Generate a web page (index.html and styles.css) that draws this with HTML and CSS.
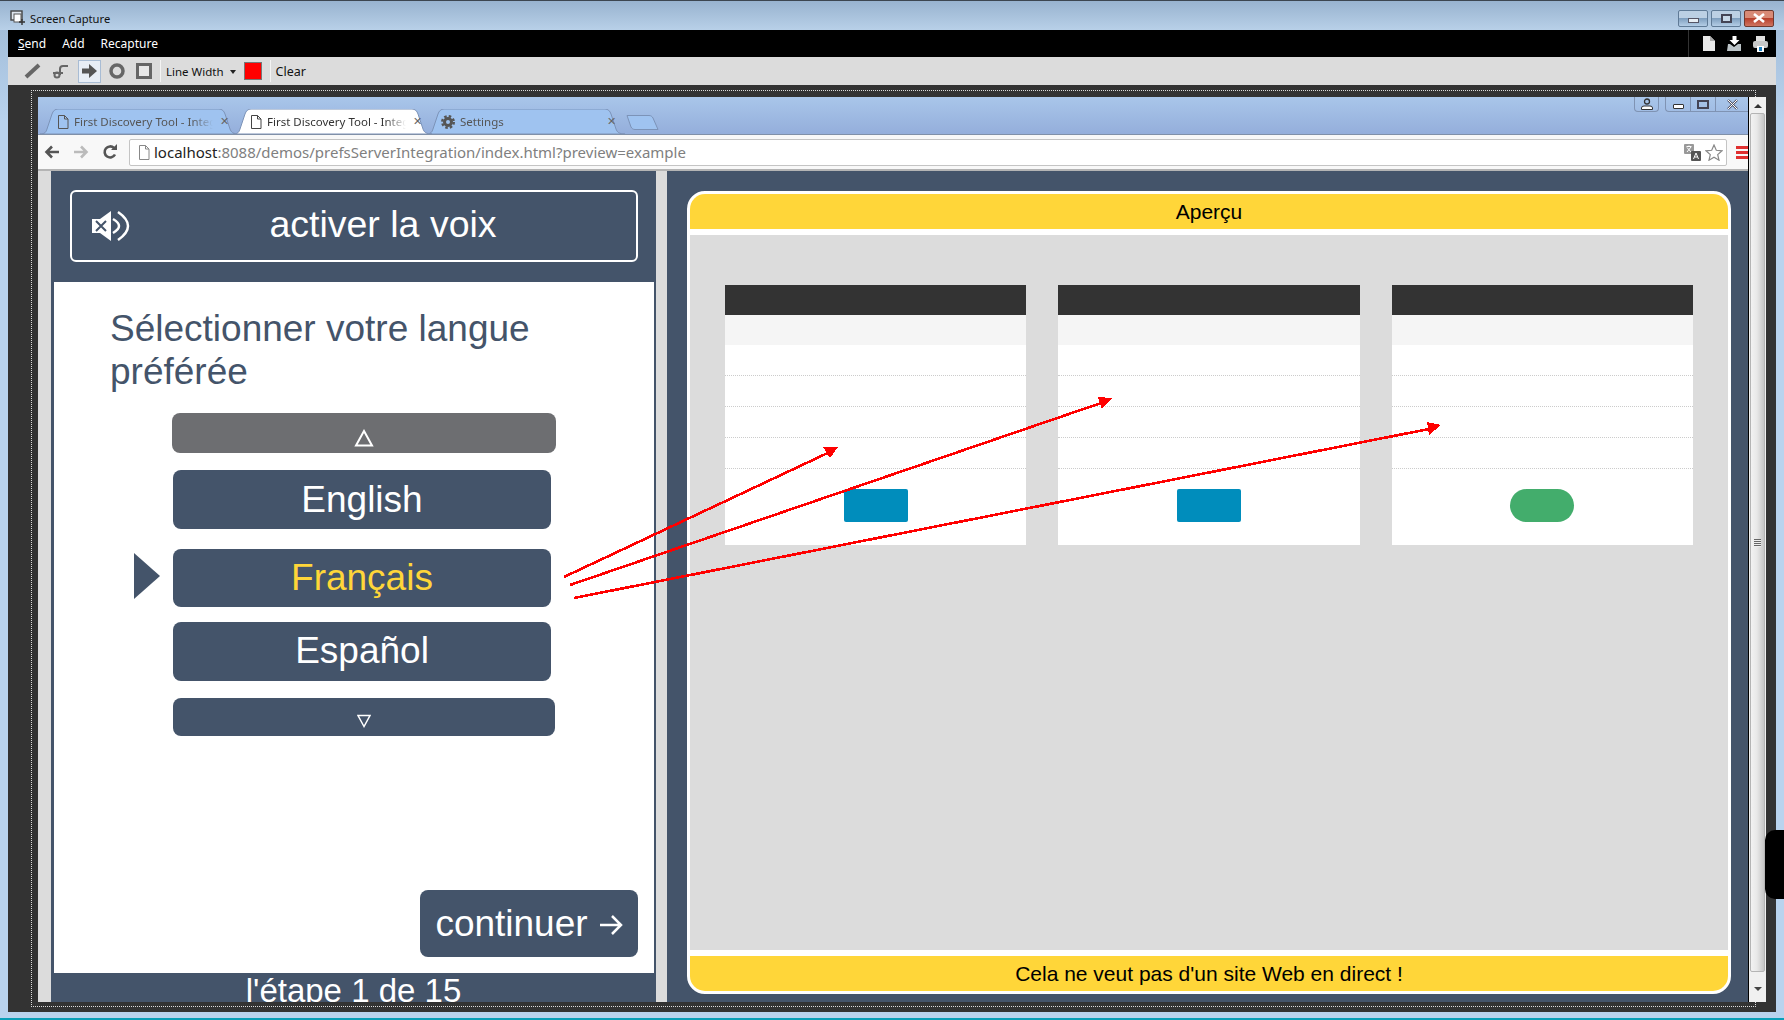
FILE: index.html
```html
<!DOCTYPE html>
<html lang="fr">
<head>
    <meta charset="UTF-8">
    <meta name="viewport" content="width=device-width, initial-scale=1.0">
    <title>Screen Capture</title>
    <link rel="stylesheet" href="styles.css">
</head>

<body>

<div class="window">
    <!-- Title bar -->
    <div class="titlebar">
        <svg class="app-icon" width="16" height="16" viewBox="0 0 16 16">
            <rect x="1" y="1" width="11" height="9" fill="#dfe6ee" stroke="#444" stroke-width="1.4"/>
            <rect x="4" y="4" width="7" height="8" fill="#fff" stroke="#555"/>
            <path d="M12 9v6M9 12h6" stroke="#333" stroke-width="1.4"/>
        </svg>
        <span class="app-title">Screen Capture</span>
        <div class="win-buttons">
            <div class="win-btn"><span class="win-min"></span></div>
            <div class="win-btn"><span class="win-max"></span></div>
            <div class="win-btn win-close">
                <svg width="14" height="10" viewBox="0 0 14 10"><path d="M2 1l10 8M12 1L2 9" stroke="#fff" stroke-width="2.6"/></svg>
            </div>
        </div>
    </div>

    <div class="capture">
        <!-- Menu -->
        <div class="menubar">
            <span class="menu-item"><u>S</u>end</span>
            <span class="menu-item">Add</span>
            <span class="menu-item">Recapture</span>
            <div class="menu-right">
                <svg width="14" height="17" viewBox="0 0 14 17"><path d="M1 1h7l5 5v10H1z" fill="#e8e8e8"/><path d="M8 1v5h5" fill="#aaa"/></svg>
                <svg width="15" height="16" viewBox="0 0 15 16"><path d="M5.500 0h4v4h3l-5 5-5-5h3z" fill="#fff"/><path d="M1 8h2l4 3 4-3h3v7H0z" fill="#bcc4c8"/></svg>
                <svg width="15" height="16" viewBox="0 0 15 16"><rect x="3" y="0" width="9" height="5" fill="#e0e0e0"/><rect x="0" y="5" width="15" height="7" rx="2" fill="#c8c8c8"/><rect x="4" y="10" width="7" height="6" fill="#fff"/><rect x="6" y="11" width="3" height="4" fill="#1a7fc0"/></svg>
            </div>
        </div>

        <!-- Drawing tools -->
        <div class="toolbar">
            <svg class="tool" width="18" height="18" viewBox="0 0 18 18"><path d="M2 15L15 3" stroke="#666" stroke-width="4"/></svg>
            <svg class="tool" width="18" height="18" viewBox="0 0 18 18"><circle cx="5" cy="13" r="2.500" fill="none" stroke="#666" stroke-width="2"/><path d="M1 11h10M8 13V7q0-3 3-3h5" fill="none" stroke="#666" stroke-width="2"/></svg>
            <div class="tool-on">
                <svg width="16" height="16" viewBox="0 0 16 16"><path d="M0 5.500h7V1l8 7-8 7v-4.500H0z" fill="#555"/></svg>
            </div>
            <svg class="tool tool-circle" width="18" height="18" viewBox="0 0 18 18"><circle cx="9" cy="9" r="6" fill="none" stroke="#666" stroke-width="3.500"/></svg>
            <svg class="tool tool-last" width="18" height="18" viewBox="0 0 18 18"><rect x="2.500" y="2.500" width="13" height="13" fill="#e8e8e8" stroke="#666" stroke-width="3"/></svg>
            <span class="tool-sep"></span>
            <span class="tool-label">Line Width</span>
            <span class="caret"></span>
            <span class="swatch"></span>
            <span class="tool-sep"></span>
            <span class="tool-label tool-clear">Clear</span>
        </div>

        <div class="stage">
            <div class="dotted"></div>
            <div class="browser">
                <div class="chrome">
                    <!-- Tabs -->
                    <div class="tabstrip">
                        <div class="tab">
                            <svg class="tab-shape" viewBox="0 0 200 25" preserveAspectRatio="none"><path d="M0 25C5 25 6 23 7 20L12 5C13 2 15 0 18 0H179C182 0 184 2 185 5L190 20C191 23 193 25 199 25Z" fill="#9fc3f0" stroke="#7c93b8"/></svg>
                            <svg class="page-icon" width="12" height="14" viewBox="0 0 12 14"><path d="M1.500.5h6l3.500 3.500v9.500H1.500zM7.500.5V4H11" fill="none" stroke="#555"/></svg>
                            <span class="tab-label">First Discovery Tool - Integ</span>
                            <span class="tab-x">✕</span>
                        </div>
                        <div class="tab tab-active">
                            <svg class="tab-shape" viewBox="0 0 200 25" preserveAspectRatio="none"><path d="M0 25C5 25 6 23 7 20L12 5C13 2 15 0 18 0H179C182 0 184 2 185 5L190 20C191 23 193 25 199 25Z" fill="#fff" stroke="#7c93b8"/></svg>
                            <svg class="page-icon" width="12" height="14" viewBox="0 0 12 14"><path d="M1.500.5h6l3.500 3.500v9.500H1.500zM7.500.5V4H11" fill="none" stroke="#444"/></svg>
                            <span class="tab-label">First Discovery Tool - Integ</span>
                            <span class="tab-x">✕</span>
                        </div>
                        <div class="tab tab-settings">
                            <svg class="tab-shape" viewBox="0 0 200 25" preserveAspectRatio="none"><path d="M0 25C5 25 6 23 7 20L12 5C13 2 15 0 18 0H179C182 0 184 2 185 5L190 20C191 23 193 25 199 25Z" fill="#9fc3f0" stroke="#7c93b8"/></svg>
                            <svg class="page-icon" width="14" height="14" viewBox="0 0 14 14"><circle cx="7" cy="7" r="3.500" fill="none" stroke="#555" stroke-width="3"/><circle cx="7" cy="7" r="5.800" fill="none" stroke="#555" stroke-width="2.400" stroke-dasharray="2.500 2.060"/></svg>
                            <span class="tab-label">Settings</span>
                            <span class="tab-x">✕</span>
                        </div>
                        <svg class="tab-new" width="34" height="17" viewBox="0 0 34 17"><path d="M1 1.500H23C25 1.500 26 2.500 27 4L32 15.500H9C7 15.500 6 14.500 5 13Z" fill="#9fc3f0" stroke="#7c93b8"/></svg>
                        <div class="browser-btns">
                            <div class="bb bb-user">
                                <svg width="14" height="12" viewBox="0 0 14 12"><circle cx="7" cy="3.500" r="2.500" fill="none" stroke="#333" stroke-width="1.300"/><path d="M1.500 11.500V10Q1.500 8 4 8h6q2.500 0 2.500 2v1.500z" fill="#fff" stroke="#333"/></svg>
                            </div>
                            <div class="bb bb-group">
                                <span class="bb-cell"><span class="bb-min"></span></span>
                                <span class="bb-cell"><span class="bb-max"></span></span>
                                <span class="bb-cell bb-last">
                                    <svg width="13" height="11" viewBox="0 0 13 11"><path d="M2 1l9 9M11 1l-9 9" stroke="#556" stroke-width="2.400"/><path d="M2 1l9 9M11 1l-9 9" stroke="#fff" stroke-width="1"/></svg>
                                </span>
                            </div>
                        </div>
                    </div>

                    <!-- Address bar -->
                    <div class="navbar">
                        <svg class="nav-icon" width="16" height="14" viewBox="0 0 16 14"><path d="M15 7H3M8 1.500L2.500 7 8 12.500" fill="none" stroke="#555" stroke-width="2.600"/></svg>
                        <svg class="nav-icon" width="16" height="14" viewBox="0 0 16 14"><path d="M1 7h12M8 1.500L13.500 7 8 12.500" fill="none" stroke="#bbb" stroke-width="2.600"/></svg>
                        <svg class="nav-icon" width="16" height="16" viewBox="0 0 16 16"><path d="M13 10.500A5.500 5.500 0 1 1 12 4" fill="none" stroke="#555" stroke-width="2.600"/><path d="M9 6h6V0z" fill="#555"/></svg>
                        <div class="omnibox">
                            <svg class="omni-page" width="12" height="15" viewBox="0 0 12 15"><path d="M1.500.5h6l3.500 3.500v10.500H1.500zM7.500.5V4H11" fill="#fff" stroke="#888"/></svg>
                            <span class="url"><span class="url-host">localhost</span>:8088/demos/prefsServerIntegration/index.html?preview=example</span>
                            <svg class="omni-translate" width="17" height="17" viewBox="0 0 17 17"><rect x="0" y="0" width="10" height="10" rx="1" fill="#999"/><path d="M2.500 2.500h5M5 1.500v1M3 8l4-5M3 3.500l4 4.500" stroke="#fff" fill="none"/><rect x="7" y="7" width="10" height="10" rx="1" fill="#555"/><path d="M9.500 15l2.500-6 2.500 6M10.500 13h3" stroke="#fff" fill="none"/></svg>
                            <svg class="omni-star" width="18" height="17" viewBox="0 0 18 17"><path d="M9 1l2.300 5.300 5.700.5-4.300 3.800 1.300 5.600L9 13.300 4 16.200l1.300-5.600L1 6.800l5.700-.5z" fill="#fff" stroke="#888" stroke-width="1.200"/></svg>
                        </div>
                        <div class="hamburger"><span></span><span></span><span></span></div>
                    </div>

                    <!-- Page -->
                    <div class="page">
                        <div class="gutter"></div>
                        <div class="left-panel">
                            <div class="voice-btn">
                                <svg class="voice-icon" width="38" height="30" viewBox="0 0 38 30">
                                    <path d="M0 8H8L19 0V30L8 22H0Z" fill="#fff"/>
                                    <path d="M4 10l10 10M14 10L4 20" stroke="#44546a" stroke-width="2"/>
                                    <path d="M21 8Q33 15 21 22" fill="none" stroke="#fff" stroke-width="2.500"/>
                                    <path d="M26 1Q46 15 26 29" fill="none" stroke="#fff" stroke-width="2.500"/>
                                </svg>
                                <span class="voice-text">activer la voix</span>
                            </div>

                            <div class="lang-card">
                                <h1 class="lang-title">Sélectionner votre langue préférée</h1>
                                <div class="lang-up">
                                    <svg width="20" height="18" viewBox="0 0 20 18"><path d="M10 2L18 16.500H2Z" fill="none" stroke="#fff" stroke-width="2"/></svg>
                                </div>
                                <div class="lang-btn lang-english">English</div>
                                <div class="lang-btn lang-french">Français</div>
                                <div class="lang-btn lang-spanish">Español</div>
                                <div class="lang-down">
                                    <svg width="14" height="14" viewBox="0 0 14 14"><path d="M7 12.500L1 1.500H13Z" fill="none" stroke="#fff" stroke-width="1.500"/></svg>
                                </div>
                                <div class="next-btn">
                                    continuer
                                    <svg class="next-arrow" width="24" height="24" viewBox="0 0 24 24"><path d="M1 12H22M13 3L22 12 13 21" fill="none" stroke="#fff" stroke-width="2.500"/></svg>
                                </div>
                            </div>

                            <div class="step">l'étape 1 de 15</div>
                        </div>
                        <div class="divider"></div>

                        <div class="right-panel">
                            <div class="preview">
                                <div class="preview-head">Aperçu</div>
                                <div class="preview-body">
                                    <div class="card">
                                        <div class="card-head"></div>
                                        <div class="card-sub"></div>
                                        <div class="card-row"></div>
                                        <div class="card-row"></div>
                                        <div class="card-row"></div>
                                        <div class="card-row"></div>
                                        <div class="card-foot"><span class="card-btn"></span></div>
                                    </div>
                                    <div class="card">
                                        <div class="card-head"></div>
                                        <div class="card-sub"></div>
                                        <div class="card-row"></div>
                                        <div class="card-row"></div>
                                        <div class="card-row"></div>
                                        <div class="card-row"></div>
                                        <div class="card-foot"><span class="card-btn"></span></div>
                                    </div>
                                    <div class="card">
                                        <div class="card-head"></div>
                                        <div class="card-sub"></div>
                                        <div class="card-row"></div>
                                        <div class="card-row"></div>
                                        <div class="card-row"></div>
                                        <div class="card-row"></div>
                                        <div class="card-foot"><span class="card-btn card-btn-green"></span></div>
                                    </div>
                                </div>
                                <div class="preview-foot">Cela ne veut pas d'un site Web en direct !</div>
                            </div>
                        </div>
                    </div>
                </div>

                <!-- Scrollbar -->
                <div class="scrollbar">
                    <span class="sb-up"></span>
                    <div class="sb-thumb"><span class="sb-grip"></span></div>
                    <span class="sb-down"></span>
                </div>
            </div>
        </div>
    </div>
    <div class="window-foot"></div>

    <!-- Things drawn over the capture -->
    <div class="side-tab"></div>
    <svg class="arrows" width="1784" height="1020" viewBox="0 0 1784 1020">
        <g stroke="#f00" stroke-width="2.600">
            <path d="M564 577L832 451"/>
            <path d="M570 585L1104 402"/>
            <path d="M574 598L1434 428"/>
        </g>
        <g fill="#f00">
            <path d="M823 447L838 447L830 458Z"/>
            <path d="M1098 397L1112 398L1102 409Z"/>
            <path d="M1427 422L1441 425L1429 435Z"/>
        </g>
    </svg>
</div>

</body>
</html>
```

FILE: styles.css
```css
* {
    box-sizing: border-box;
}
html, body {
    margin: 0;
    padding: 0;
    overflow: hidden;
}
body {
    font-family: "Liberation Sans", Arial, sans-serif;
}
.window {
    position: relative;
    width: 1784px;
    height: 1020px;
    display: flex;
    flex-direction: column;
    background: linear-gradient(#9db8d4, #b9d3ee 120px);
    border-top: 1px solid #3c4650;
}

/* title bar */
.titlebar {
    height: 29px;
    display: flex;
    align-items: center;
    padding: 5px 0 0 10px;
    background: linear-gradient(#98b3cf, #b8d0e8);
}
.app-title {
    margin-left: 4px;
    font-family: "Noto Sans", sans-serif;
    font-size: 11.200px;
    color: #111;
}
.win-buttons {
    margin-left: auto;
    margin-right: 10px;
    display: flex;
    gap: 3px;
}
.win-btn {
    width: 30px;
    height: 17px;
    border: 1px solid #5f7a96;
    border-radius: 2px;
    background: linear-gradient(#bcd0e4 45%, #7f9fbf 50%, #b4cde6);
    display: flex;
    align-items: center;
    justify-content: center;
}
.win-close {
    background: linear-gradient(#d88a76 45%, #b8402c 50%, #cf7460);
    border-color: #6e3a30;
}
.win-min {
    width: 11px;
    height: 5px;
    margin-top: 5px;
    background: #e8eef4;
    border: 1px solid #556;
}
.win-max {
    width: 11px;
    height: 9px;
    border: 2px solid #445;
    background: #c8d8e8;
}

.capture {
    flex: 1;
    margin: 0 8px;
    display: flex;
    flex-direction: column;
    min-height: 0;
}
.menubar {
    height: 27px;
    background: #000;
    display: flex;
    align-items: center;
    padding-left: 10px;
    gap: 16px;
    color: #fff;
    font-family: "Noto Sans", sans-serif;
    font-size: 12px;
}
.menu-right {
    margin-left: auto;
    height: 100%;
    border-left: 1px solid #333;
    padding: 0 8px 0 13px;
    display: flex;
    align-items: center;
    gap: 11px;
}

.toolbar {
    height: 28px;
    background: #dcdcdc;
    display: flex;
    align-items: center;
    padding-left: 16px;
    font-family: "Noto Sans", sans-serif;
    font-size: 11.500px;
    color: #111;
}
.tool {
    margin-right: 10px;
    flex: none;
}
.tool-circle {
    margin-right: 9px;
}
.tool-last {
    margin-right: 7px;
}
.tool-on {
    width: 23px;
    height: 23px;
    margin-right: 7px;
    margin-left: -2px;
    border: 1px solid #a8bcd4;
    background: #e8eef6;
    display: flex;
    align-items: center;
    justify-content: center;
}
.tool-sep {
    width: 1px;
    height: 22px;
    background: #f4f4f4;
    margin-right: 5px;
}
.tool-clear {
    font-size: 12.500px;
}
.caret {
    width: 0;
    height: 0;
    margin: 1px 8px 0 6px;
    border-left: 3px solid transparent;
    border-right: 3px solid transparent;
    border-top: 4px solid #222;
}
.swatch {
    width: 18px;
    height: 18px;
    background: #f00;
    border: 1px solid #777;
    margin-right: 8px;
}

/* the dark area with the captured browser */
.stage {
    flex: 1;
    min-height: 0;
    position: relative;
    background: #333;
    padding: 12px 10px 10px 30px;
}
.dotted {
    position: absolute;
    left: 23px;
    top: 5px;
    width: 1725px;
    height: 917px;
    border: 1px dotted #ddd;
}
.browser {
    position: relative;
    height: 100%;
    display: flex;
}
.chrome {
    flex: 1;
    min-width: 0;
    display: flex;
    flex-direction: column;
    border-right: 1px solid #000;
}
.tabstrip {
    height: 38px;
    flex: none;
    position: relative;
    display: flex;
    align-items: flex-end;
    padding-left: 2px;
    background: linear-gradient(#a9c6ea, #94aedb);
    border-bottom: 1px solid #8090a8;
}
.tab {
    position: relative;
    width: 200px;
    height: 25px;
    margin-right: -7px;
    display: flex;
    align-items: center;
    padding-left: 17px;
    font-family: "Noto Sans", sans-serif;
    font-size: 11.500px;
    color: #555;
}
.tab-active {
    color: #333;
    z-index: 1;
}
.tab-settings {
    margin-right: 0;
    padding-left: 15px;
}
.tab-shape {
    position: absolute;
    left: 0;
    top: 0;
    width: 100%;
    height: 100%;
}
.page-icon {
    position: relative;
    flex: none;
}
.tab-label {
    position: relative;
    width: 139px;
    margin-left: 5px;
    white-space: nowrap;
    -webkit-mask-image: linear-gradient(to right, #000 85%, transparent);
    mask-image: linear-gradient(to right, #000 85%, transparent);
}
.tab-settings .tab-label {
    width: 140px;
}
.tab-x {
    position: relative;
    width: 12px;
    margin-left: 7px;
    font-family: "DejaVu Sans", sans-serif;
    font-size: 11px;
    font-weight: bold;
    color: #666;
}
.tab-new {
    margin-bottom: 3px;
}
.browser-btns {
    position: absolute;
    top: 0;
    right: 0;
    display: flex;
    gap: 6px;
}
.bb {
    height: 15px;
    border: 1px solid #7f93b3;
    border-top: 0;
    display: flex;
    align-items: center;
    justify-content: center;
}
.bb-user {
    width: 25px;
    border-radius: 0 0 4px 4px;
}
.bb-group {
    border-radius: 0 0 0 4px;
    border-right: 0;
}
.bb-cell {
    width: 25px;
    height: 100%;
    display: flex;
    align-items: center;
    justify-content: center;
    border-right: 1px solid #7f93b3;
}
.bb-last {
    border-right: 0;
    width: 32px;
}
.bb-min {
    width: 11px;
    height: 5px;
    margin-top: 4px;
    border: 1px solid #333;
    background: #fff;
    border-radius: 1px;
}
.bb-max {
    width: 12px;
    height: 9px;
    border: 2px solid #445;
}

.navbar {
    height: 36px;
    flex: none;
    display: flex;
    align-items: center;
    padding: 0 0 0 6px;
    gap: 13px;
    background: #f8f8f8;
    border-bottom: 2px solid #b4b4b4;
    overflow: hidden;
}
.nav-icon {
    flex: none;
}
.omnibox {
    width: 1598px;
    height: 27px;
    margin-left: -2px;
    display: flex;
    align-items: center;
    padding-left: 8px;
    background: #fff;
    border: 1px solid #c4c4c4;
    border-radius: 2px;
    flex: none;
}
.url {
    margin-left: 4px;
    font-family: "Noto Sans", sans-serif;
    font-size: 15px;
    color: #808080;
}
.url-host {
    color: #222;
}
.omni-translate {
    margin-left: auto;
    margin-right: 4px;
}
.omni-star {
    margin-right: 3px;
}
.hamburger {
    flex: none;
    width: 12px;
    margin-left: -4px;
    display: flex;
    flex-direction: column;
    gap: 2px;
}
.hamburger span {
    height: 3px;
    background: #e03030;
}

.page {
    flex: 1;
    min-height: 0;
    display: flex;
    background: #44546a;
    overflow: hidden;
}
.gutter, .divider {
    background: #dcdcdc;
    flex: none;
}
.gutter {
    width: 13px;
}
.divider {
    width: 11px;
}

/* left side */
.left-panel {
    width: 605px;
    flex: none;
    display: flex;
    flex-direction: column;
    color: #fff;
}
.voice-btn {
    height: 72px;
    flex: none;
    margin: 19px 18px 0 19px;
    border: 2px solid #fff;
    border-radius: 6px;
    display: flex;
    align-items: center;
    padding-left: 20px;
}
.voice-icon {
    flex: none;
}
.voice-text {
    flex: 1;
    text-align: center;
    font-size: 37.500px;
    padding-bottom: 3px;
}
.lang-card {
    height: 691px;
    flex: none;
    margin: 20px 2px 0 3px;
    background: #fff;
    display: flex;
    flex-direction: column;
    padding-top: 25px;
}
.lang-title {
    margin: 0 0 20px 56px;
    width: 470px;
    font-size: 37px;
    line-height: 43px;
    font-weight: normal;
    color: #44546a;
}
.lang-up {
    width: 384px;
    height: 40px;
    margin-left: 118px;
    background: #6d6e71;
    border-radius: 8px;
    display: flex;
    justify-content: center;
    align-items: flex-end;
    padding-bottom: 6px;
}
.lang-btn {
    position: relative;
    width: 378px;
    margin-left: 119px;
    background: #44546a;
    border-radius: 8px;
    color: #fff;
    font-size: 37px;
    text-align: center;
    display: flex;
    align-items: center;
    justify-content: center;
}
.lang-english {
    height: 59px;
    margin-top: 17px;
}
.lang-french {
    height: 58px;
    margin-top: 20px;
    color: #ffd639;
}
.lang-french::before {
    content: "";
    position: absolute;
    left: -39px;
    top: 4px;
    border-left: 26px solid #44546a;
    border-top: 23px solid transparent;
    border-bottom: 23px solid transparent;
}
.lang-spanish {
    height: 59px;
    margin-top: 15px;
    padding-bottom: 1px;
}
.lang-down {
    width: 382px;
    height: 38px;
    margin: 17px 0 0 119px;
    background: #44546a;
    border-radius: 8px;
    display: flex;
    justify-content: center;
    align-items: flex-end;
    padding-bottom: 8px;
}
.next-btn {
    margin: auto 16px 16px 0;
    align-self: flex-end;
    width: 218px;
    height: 67px;
    background: #44546a;
    border-radius: 8px;
    color: #fff;
    font-size: 37px;
    display: flex;
    align-items: center;
    justify-content: center;
    gap: 11px;
    white-space: nowrap;
}
.next-arrow {
    flex: none;
    margin-top: 2px;
}
.step {
    text-align: center;
    font-size: 33px;
    line-height: 36px;
}

/* right side */
.right-panel {
    flex: 1;
    min-width: 0;
    padding: 20px 17px 8px 20px;
}
.preview {
    height: 100%;
    background: #fff;
    border: 3px solid #fff;
    border-radius: 18px;
    overflow: hidden;
    display: flex;
    flex-direction: column;
}
.preview-head, .preview-foot {
    height: 35px;
    flex: none;
    background: #ffd639;
    color: #000;
    font-size: 21px;
    padding-top: 1px;
    display: flex;
    align-items: center;
    justify-content: center;
}
.preview-body {
    flex: 1;
    min-height: 0;
    margin: 6px 0;
    background: #dcdcdc;
    padding: 50px 35px 0;
    display: flex;
    align-items: flex-start;
    gap: 32px;
}
.card {
    flex: 1;
    background: #fff;
}
.card-head {
    height: 30px;
    background: #333;
}
.card-sub {
    height: 30px;
    background: #f5f5f5;
}
.card-row {
    height: 31px;
    border-bottom: 1px dotted #ccc;
}
.card-foot {
    height: 76px;
    padding-top: 20px;
    display: flex;
    justify-content: center;
}
.card-btn {
    width: 64px;
    height: 33px;
    background: #008dbc;
    border-radius: 2px;
}
.card-btn-green {
    background: #43ad6c;
    border-radius: 17px;
}

/* scrollbar */
.scrollbar {
    width: 17px;
    flex: none;
    background: #f0f0f0;
    display: flex;
    flex-direction: column;
    align-items: center;
}
.sb-up, .sb-down {
    flex: none;
    width: 0;
    height: 0;
    border-left: 4px solid transparent;
    border-right: 4px solid transparent;
}
.sb-up {
    margin: 7px 0 5px;
    border-bottom: 4px solid #333;
}
.sb-down {
    margin: 15px 0 0;
    border-top: 4px solid #444;
}
.sb-thumb {
    width: 15px;
    height: 859px;
    flex: none;
    border: 1px solid #b4b4b4;
    border-radius: 2px;
    background: linear-gradient(to right, #f2f2f2, #e8e8e8 45%, #c6c6c6);
    display: flex;
    align-items: center;
    justify-content: center;
}
.sb-grip {
    width: 7px;
    height: 8px;
    background: repeating-linear-gradient(#666 0 1px, #eee 1px 2px);
}

.window-foot {
    height: 8px;
    flex: none;
    border-bottom: 2px solid #0a9fb8;
}
.side-tab {
    position: absolute;
    left: 1765px;
    top: 829px;
    width: 19px;
    height: 69px;
    background: #000;
    border-radius: 10px 0 0 10px;
}
.arrows {
    position: absolute;
    left: 0;
    top: -1px;
    pointer-events: none;
    shape-rendering: crispEdges;
}
```
